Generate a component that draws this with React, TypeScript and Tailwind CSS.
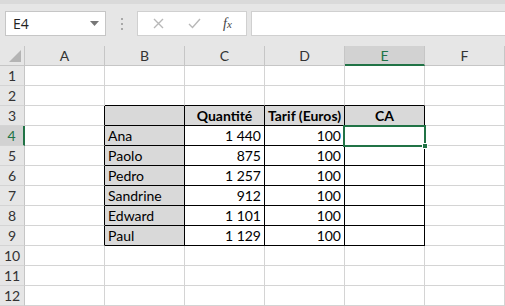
import { ReactNode } from 'react';

const COLS = ['A', 'B', 'C', 'D', 'E', 'F'];
const ROWS = [1, 2, 3, 4, 5, 6, 7, 8, 9, 10, 11, 12];

const people = [
  { name: 'Ana', qty: '1 440' },
  { name: 'Paolo', qty: '875' },
  { name: 'Pedro', qty: '1 257' },
  { name: 'Sandrine', qty: '912' },
  { name: 'Edward', qty: '1 101' },
  { name: 'Paul', qty: '1 129' },
];

// table occupies B3:E9
const inTable = (r: number, c: number) => r >= 3 && r <= 9 && c >= 1 && c <= 4;

function cellContent(r: number, c: number): { text: ReactNode; align: string; bold: boolean; fill: boolean } {
  if (r === 3 && c >= 1 && c <= 4) {
    const heads = ['', 'Quantité', 'Tarif (Euros)', 'CA'];
    return { text: heads[c - 1], align: 'justify-center', bold: true, fill: true };
  }
  if (r >= 4 && r <= 9) {
    const p = people[r - 4];
    if (c === 1) return { text: p.name, align: 'justify-start', bold: false, fill: true };
    if (c === 2) return { text: p.qty, align: 'justify-end', bold: false, fill: false };
    if (c === 3) return { text: '100', align: 'justify-end', bold: false, fill: false };
  }
  return { text: '', align: 'justify-start', bold: false, fill: false };
}

function Cell({ r, c }: { r: number; c: number }) {
  const right = inTable(r, c) || inTable(r, c + 1);
  const bottom = inTable(r, c) || inTable(r + 1, c);
  const { text, align, bold, fill } = cellContent(r, c);
  return (
    <div
      className={
        'flex h-5 items-end overflow-visible whitespace-nowrap border-r border-b px-[3px] pb-[1px] text-[14px] leading-[17px] text-black ' +
        align +
        (right ? ' border-r-black' : ' border-r-[#d4d4d4]') +
        (bottom ? ' border-b-black' : ' border-b-[#d4d4d4]') +
        (fill ? ' bg-[#d9d9d9]' : ' bg-white') +
        (bold ? ' font-bold' : '')
      }
    >
      {text}
    </div>
  );
}

export default function App() {
  return (
    <div className="h-[306px] w-[505px] overflow-hidden bg-white font-[Lato,sans-serif]">
      {/* name box + formula bar */}
      <div className="flex h-[46px] items-start border-t-4 border-t-[#dadada] bg-[#e6e6e6] pt-[7px]">
        <div className="ml-[5px] flex h-[25px] w-[101px] items-center justify-between border border-[#c6c6c6] bg-white pl-[7px] pr-[6px] font-['Open_Sans',sans-serif] text-[14px] text-[#222]">
          <span>E4</span>
          <svg width="9" height="5" viewBox="0 0 9 5">
            <path d="M0 0 L9 0 L4.5 5 Z" fill="#777" />
          </svg>
        </div>
        <div className="ml-[15px] flex h-[25px] flex-col items-center justify-center gap-[3px]">
          <span className="h-[2px] w-[2px] bg-[#a8a8a8]" />
          <span className="h-[2px] w-[2px] bg-[#a8a8a8]" />
          <span className="h-[2px] w-[2px] bg-[#a8a8a8]" />
        </div>
        <div className="ml-[14px] flex h-[25px] w-[110px] items-center border border-[#d0d0d0] bg-white">
          <svg className="ml-[15px]" width="11" height="11" viewBox="0 0 11 11">
            <path d="M1 1 L10 10 M10 1 L1 10" stroke="#b8b8b8" strokeWidth="1.4" />
          </svg>
          <svg className="ml-[24px]" width="13" height="11" viewBox="0 0 13 11">
            <path d="M1 6 L4.5 9.5 L12 1" stroke="#b8b8b8" strokeWidth="1.4" fill="none" />
          </svg>
          <span className="ml-[22px] font-['Liberation_Serif',serif] text-[14px] italic text-[#444]">
            f<span className="text-[11px]">x</span>
          </span>
        </div>
        <div className="ml-[4px] h-[25px] flex-1 border border-r-0 border-[#d0d0d0] bg-white" />
      </div>

      {/* sheet */}
      <div className="relative grid grid-cols-[25px_repeat(6,80px)]">
        {/* column headers */}
        <div className="relative h-5 border-r border-b border-[#c6c6c6] bg-[#e6e6e6]">
          <svg className="absolute right-[3px] bottom-[3px]" width="12" height="12" viewBox="0 0 12 12">
            <path d="M12 0 L12 12 L0 12 Z" fill="#b4b4b4" />
          </svg>
        </div>
        {COLS.map((col) =>
          col === 'E' ? (
            <div
              key={col}
              className="flex h-5 items-center justify-center border-r border-b-2 border-r-[#c6c6c6] border-b-[#217346] bg-[#d2d2d2] text-[14px] text-[#217346]"
            >
              {col}
            </div>
          ) : (
            <div
              key={col}
              className="flex h-5 items-center justify-center border-r border-b border-[#c6c6c6] bg-[#e6e6e6] text-[14px] text-[#333]"
            >
              {col}
            </div>
          ),
        )}

        {ROWS.map((r) => (
          <div key={r} className="contents">
            {r === 4 ? (
              <div className="flex h-5 items-center justify-center border-r-2 border-b border-r-[#217346] border-b-[#d4d4d4] bg-[#d2d2d2] text-[14px] text-[#217346]">
                {r}
              </div>
            ) : (
              <div className="flex h-5 items-center justify-center border-r border-b border-r-[#c6c6c6] border-b-[#d4d4d4] bg-[#e6e6e6] text-[14px] text-[#333]">
                {r}
              </div>
            )}
            {COLS.map((_, c) => (
              <Cell key={c} r={r} c={c} />
            ))}
          </div>
        ))}

        {/* active cell E4 */}
        <div className="pointer-events-none absolute top-[79px] left-[343px] h-[22px] w-[83px] border-2 border-[#217346]">
          <div className="absolute -right-[4px] -bottom-[4px] h-[6px] w-[6px] border border-white bg-[#217346]" />
        </div>
      </div>
    </div>
  );
}
